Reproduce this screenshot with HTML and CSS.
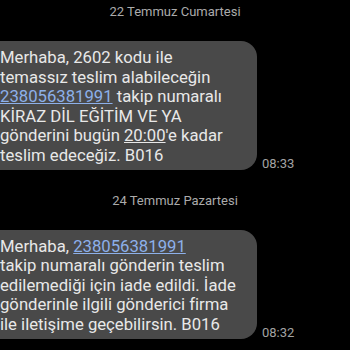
FILE: index.html
```html
<!DOCTYPE html>
<html lang="tr">
<head>
  <meta charset="UTF-8" />
  <meta name="viewport" content="width=device-width, initial-scale=1" />
  <title>Mesajlar</title>
  <link rel="stylesheet" href="styles.css">
</head>
<body>

  <!-- Gün 1 -->
  <div class="tarih">22 Temmuz Cumartesi</div>
  <div class="satir">
    <div class="balon">
      Merhaba, 2602 kodu ile<br>
      temassız teslim alabileceğin<br>
      <a class="link" href="#">238056381991</a> takip numaralı<br>
      KİRAZ DİL EĞİTİM VE YA<br>
      gönderini bugün <span class="alti">20:00</span>'e kadar<br>
      teslim edeceğiz. B016
    </div>
    <div class="saat">08:33</div>
  </div>

  <!-- Gün 2 -->
  <div class="tarih">24 Temmuz Pazartesi</div>
  <div class="satir">
    <div class="balon">
      Merhaba, <a class="link" href="#">238056381991</a><br>
      takip numaralı gönderin teslim<br>
      edilemediği için iade edildi. İade<br>
      gönderinle ilgili gönderici firma<br>
      ile iletişime geçebilirsin. B016
    </div>
    <div class="saat">08:32</div>
  </div>

</body>
</html>
```

FILE: styles.css
```css
body {
  background: #000;
  font-family: Roboto, "Noto Sans", sans-serif;
  margin: 0;
  padding: 0;
  overflow: hidden;
}

.tarih {
  text-align: center;
  font-size: 13px;
  line-height: 18px;
  color: #ababab;
  padding-top: 3px;
  margin-bottom: 20px;
}

.satir {
  display: flex;
  align-items: flex-end;
  margin-bottom: 19px;
}

.balon {
  background-color: #494949;
  color: #e8e8e8;
  font-size: 16.7px;
  line-height: 19.6px;
  white-space: nowrap;
  width: 237px;
  margin-left: -20px;
  padding: 7px 20px 4px 20px;
  border-radius: 16px;
  flex-shrink: 0;
}

.link {
  color: #8db0ea;
  text-decoration: underline;
}

.alti {
  text-decoration: underline;
}

.saat {
  font-size: 13px;
  line-height: 13px;
  color: #a3a3a3;
  margin-left: 5px;
}
```
